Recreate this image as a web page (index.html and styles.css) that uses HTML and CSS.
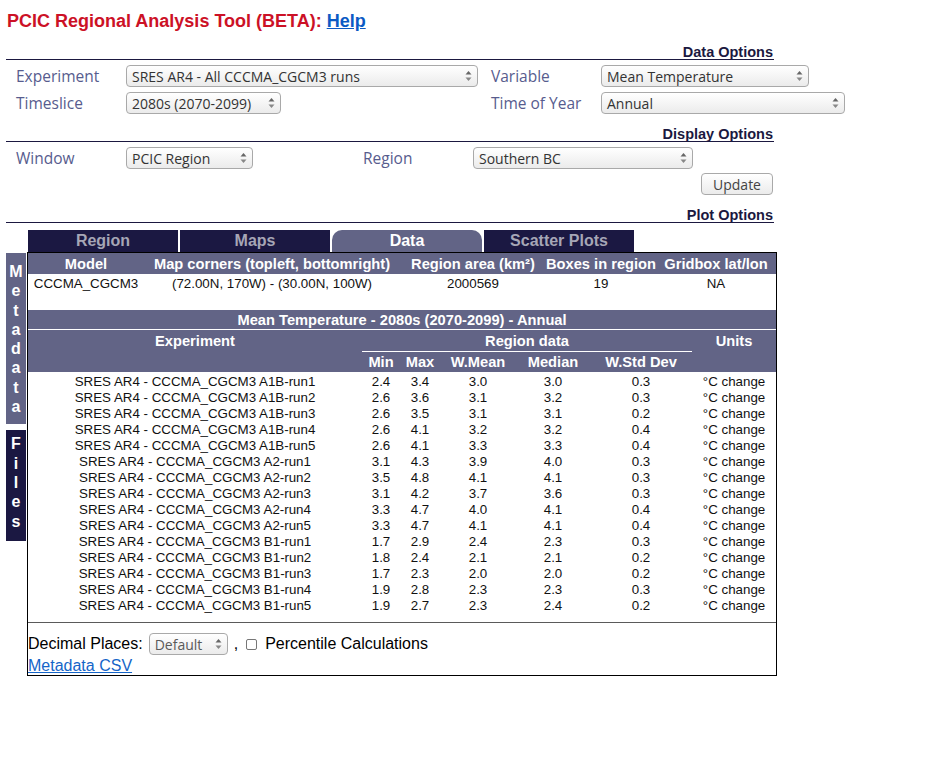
FILE: index.html
```html
<!DOCTYPE html>
<html>
<head>
<meta charset="utf-8">
<title>PCIC Regional Analysis Tool</title>
<link rel="stylesheet" href="styles.css">
</head>
<body>
<div class="page">
  <h1 class="title">PCIC Regional Analysis Tool (BETA): <a href="#">Help</a></h1>

  <div class="section-head head-data">Data Options</div>
  <div class="opt-grid data-grid">
    <span class="lbl">Experiment</span>
    <span class="sel w-exp"><span>SRES AR4 - All CCCMA_CGCM3 runs</span><svg class="arr" width="7" height="12" viewBox="0 0 7 12"><path d="M0.5 4.5 L3.5 1 L6.5 4.5Z" fill="#666"/><path d="M0.5 7.5 L3.5 11 L6.5 7.5Z" fill="#888"/></svg></span>
    <span class="lbl">Variable</span>
    <span class="sel w-var"><span>Mean Temperature</span><svg class="arr" width="7" height="12" viewBox="0 0 7 12"><path d="M0.5 4.5 L3.5 1 L6.5 4.5Z" fill="#666"/><path d="M0.5 7.5 L3.5 11 L6.5 7.5Z" fill="#888"/></svg></span>
    <span class="lbl">Timeslice</span>
    <span class="sel w-time"><span>2080s (2070-2099)</span><svg class="arr" width="7" height="12" viewBox="0 0 7 12"><path d="M0.5 4.5 L3.5 1 L6.5 4.5Z" fill="#666"/><path d="M0.5 7.5 L3.5 11 L6.5 7.5Z" fill="#888"/></svg></span>
    <span class="lbl">Time of Year</span>
    <span class="sel w-toy"><span>Annual</span><svg class="arr" width="7" height="12" viewBox="0 0 7 12"><path d="M0.5 4.5 L3.5 1 L6.5 4.5Z" fill="#666"/><path d="M0.5 7.5 L3.5 11 L6.5 7.5Z" fill="#888"/></svg></span>
  </div>

  <div class="section-head head-display">Display Options</div>
  <div class="opt-grid display-grid">
    <span class="lbl">Window</span>
    <span class="sel w-win"><span>PCIC Region</span><svg class="arr" width="7" height="12" viewBox="0 0 7 12"><path d="M0.5 4.5 L3.5 1 L6.5 4.5Z" fill="#666"/><path d="M0.5 7.5 L3.5 11 L6.5 7.5Z" fill="#888"/></svg></span>
    <span class="lbl">Region</span>
    <span class="sel w-reg"><span>Southern BC</span><svg class="arr" width="7" height="12" viewBox="0 0 7 12"><path d="M0.5 4.5 L3.5 1 L6.5 4.5Z" fill="#666"/><path d="M0.5 7.5 L3.5 11 L6.5 7.5Z" fill="#888"/></svg></span>
  </div>
  <div class="update-row"><button class="btn">Update</button></div>

  <div class="section-head head-plot">Plot Options</div>

  <div class="workspace">
    <div class="side">
      <div class="side-tab meta"><span>M</span><span>e</span><span>t</span><span>a</span><span>d</span><span>a</span><span>t</span><span>a</span></div>
      <div class="side-tab files"><span>F</span><span>i</span><span>l</span><span>e</span><span>s</span></div>
    </div>
    <div class="main">
      <div class="tabs">
        <div class="tab">Region</div>
        <div class="tab">Maps</div>
        <div class="tab active">Data</div>
        <div class="tab">Scatter Plots</div>
      </div>
      <div class="panel">
        <table class="meta-table">
          <colgroup><col class="c116"><col class="c256"><col class="c146"><col class="c110"><col class="c120"></colgroup>
          <tr><th>Model</th><th>Map corners (topleft, bottomright)</th><th>Region area (km²)</th><th>Boxes in region</th><th>Gridbox lat/lon</th></tr>
          <tr><td>CCCMA_CGCM3</td><td>(72.00N, 170W) - (30.00N, 100W)</td><td>2000569</td><td>19</td><td>NA</td></tr>
        </table>

        <table class="data-table">
          <colgroup><col class="c334"><col class="c38"><col class="c40"><col class="c76"><col class="c74"><col class="c102"><col class="c84"></colgroup>
          <tr class="titlebar"><th colspan="7">Mean Temperature - 2080s (2070-2099) - Annual</th></tr>
          <tr class="hrow1"><th rowspan="2" class="top">Experiment</th><th colspan="5" class="rdata">Region data</th><th rowspan="2" class="top">Units</th></tr>
          <tr class="hrow2"><th>Min</th><th>Max</th><th>W.Mean</th><th>Median</th><th>W.Std Dev</th></tr>
          <tr class="first"><td>SRES AR4 - CCCMA_CGCM3 A1B-run1</td><td>2.4</td><td>3.4</td><td>3.0</td><td>3.0</td><td>0.3</td><td>°C change</td></tr>
          <tr><td>SRES AR4 - CCCMA_CGCM3 A1B-run2</td><td>2.6</td><td>3.6</td><td>3.1</td><td>3.2</td><td>0.3</td><td>°C change</td></tr>
          <tr><td>SRES AR4 - CCCMA_CGCM3 A1B-run3</td><td>2.6</td><td>3.5</td><td>3.1</td><td>3.1</td><td>0.2</td><td>°C change</td></tr>
          <tr><td>SRES AR4 - CCCMA_CGCM3 A1B-run4</td><td>2.6</td><td>4.1</td><td>3.2</td><td>3.2</td><td>0.4</td><td>°C change</td></tr>
          <tr><td>SRES AR4 - CCCMA_CGCM3 A1B-run5</td><td>2.6</td><td>4.1</td><td>3.3</td><td>3.3</td><td>0.4</td><td>°C change</td></tr>
          <tr><td>SRES AR4 - CCCMA_CGCM3 A2-run1</td><td>3.1</td><td>4.3</td><td>3.9</td><td>4.0</td><td>0.3</td><td>°C change</td></tr>
          <tr><td>SRES AR4 - CCCMA_CGCM3 A2-run2</td><td>3.5</td><td>4.8</td><td>4.1</td><td>4.1</td><td>0.3</td><td>°C change</td></tr>
          <tr><td>SRES AR4 - CCCMA_CGCM3 A2-run3</td><td>3.1</td><td>4.2</td><td>3.7</td><td>3.6</td><td>0.3</td><td>°C change</td></tr>
          <tr><td>SRES AR4 - CCCMA_CGCM3 A2-run4</td><td>3.3</td><td>4.7</td><td>4.0</td><td>4.1</td><td>0.4</td><td>°C change</td></tr>
          <tr><td>SRES AR4 - CCCMA_CGCM3 A2-run5</td><td>3.3</td><td>4.7</td><td>4.1</td><td>4.1</td><td>0.4</td><td>°C change</td></tr>
          <tr><td>SRES AR4 - CCCMA_CGCM3 B1-run1</td><td>1.7</td><td>2.9</td><td>2.4</td><td>2.3</td><td>0.3</td><td>°C change</td></tr>
          <tr><td>SRES AR4 - CCCMA_CGCM3 B1-run2</td><td>1.8</td><td>2.4</td><td>2.1</td><td>2.1</td><td>0.2</td><td>°C change</td></tr>
          <tr><td>SRES AR4 - CCCMA_CGCM3 B1-run3</td><td>1.7</td><td>2.3</td><td>2.0</td><td>2.0</td><td>0.2</td><td>°C change</td></tr>
          <tr><td>SRES AR4 - CCCMA_CGCM3 B1-run4</td><td>1.9</td><td>2.8</td><td>2.3</td><td>2.3</td><td>0.3</td><td>°C change</td></tr>
          <tr><td>SRES AR4 - CCCMA_CGCM3 B1-run5</td><td>1.9</td><td>2.7</td><td>2.3</td><td>2.4</td><td>0.2</td><td>°C change</td></tr>
        </table>

        <div class="sep"></div>
        <div class="dec-row">
          <span>Decimal Places:</span>
          <span class="sel w-dec"><span>Default</span><svg class="arr" width="7" height="12" viewBox="0 0 7 12"><path d="M0.5 4.5 L3.5 1 L6.5 4.5Z" fill="#666"/><path d="M0.5 7.5 L3.5 11 L6.5 7.5Z" fill="#888"/></svg></span>
          <span class="comma">,</span>
          <span class="chk"></span>
          <span class="pct">Percentile Calculations</span>
        </div>
        <div class="link-row"><a href="#">Metadata CSV</a></div>
      </div>
    </div>
  </div>
</div>
</body>
</html>
```

FILE: styles.css
```css
body {
  margin: 0;
  background: #fff;
  color: #000;
  font-family: "Liberation Sans", Arial, sans-serif;
}

.page {
  padding-left: 6px;
  width: 768px;
}

.title {
  margin: 10px 0 0 1px;
  font-size: 18px;
  line-height: 22px;
  font-weight: bold;
  color: #cc1126;
}

.title a {
  color: #0b5ac4;
  text-decoration: underline;
}

.section-head {
  text-align: right;
  font-weight: bold;
  font-size: 14.5px;
  line-height: 14px;
  padding: 0 1px 0 0;
  border-bottom: 1px solid #1b1840;
  color: #1b1840;
}

.head-data { margin-top: 13px; }
.head-display { margin-top: 13px; }
.head-plot { margin-top: 13px; }

.opt-grid {
  display: grid;
  padding: 5px 0 0 10px;
  row-gap: 5px;
  align-items: center;
  justify-items: start;
}

.data-grid { grid-template-columns: 110px 365px 110px auto; }
.display-grid { grid-template-columns: 110px 237px 110px auto; }

.lbl {
  font-family: "Open Sans", "DejaVu Sans", sans-serif;
  font-size: 15.5px;
  line-height: 22px;
  color: #575c8e;
  margin-top: -1px;
}

.sel {
  display: inline-flex;
  align-items: center;
  justify-content: space-between;
  box-sizing: border-box;
  height: 22px;
  padding: 0 5px 0 5px;
  border: 1px solid #a9a9a9;
  border-radius: 4px;
  background: linear-gradient(#ffffff, #ebebeb);
  font-family: "Open Sans", "DejaVu Sans", sans-serif;
  font-size: 14px;
  color: #333;
  white-space: nowrap;
}

.arr { flex: none; }

.w-exp { width: 352px; }
.w-var { width: 208px; }
.w-time { width: 155px; }
.w-toy { width: 244px; }
.w-win { width: 127px; }
.w-reg { width: 220px; }
.w-dec { width: 79px; color: #5a5a5a; margin-left: 6px; }

.update-row {
  display: flex;
  justify-content: flex-end;
  margin-top: 4px;
  padding-right: 1px;
}

.btn {
  box-sizing: border-box;
  width: 72px;
  height: 22px;
  padding: 0;
  border: 1px solid #a9a9a9;
  border-radius: 4px;
  background: linear-gradient(#ffffff, #ebebeb);
  font-family: "Open Sans", "DejaVu Sans", sans-serif;
  font-size: 14px;
  color: #444;
}

.workspace {
  display: flex;
  margin-top: 7px;
}

.side {
  flex: none;
  width: 20px;
  margin-right: 1px;
  padding-top: 23px;
}

.side-tab {
  display: flex;
  flex-direction: column;
  align-items: center;
  color: #fff;
  font-weight: bold;
  font-size: 16px;
  line-height: 19.3px;
}

.meta {
  background: #626486;
  padding: 9px 0 8px;
}

.files {
  background: #1b1842;
  margin-top: 6px;
  padding: 4px 0 10px;
}

.main {
  flex: none;
  width: 750px;
}

.tabs {
  display: flex;
  gap: 2px;
  padding-left: 1px;
}

.tab {
  width: 150px;
  height: 22px;
  line-height: 22px;
  text-align: center;
  font-weight: bold;
  font-size: 16px;
  background: #1b1842;
  color: #a6a6b6;
}

.tab.active {
  background: #626486;
  color: #fff;
  border-radius: 10px 10px 0 0;
}

.panel {
  border: 1px solid #000;
  height: 422px;
}

table {
  width: 748px;
  table-layout: fixed;
  border-collapse: separate;
  border-spacing: 0;
}

th {
  background: #626486;
  color: #fff;
  font-weight: bold;
  font-size: 14.67px;
  padding: 0;
  text-align: center;
  white-space: nowrap;
}

td {
  padding: 0;
  text-align: center;
  font-size: 13.33px;
  white-space: nowrap;
  color: #111;
}

.c116 { width: 116px; }
.c256 { width: 256px; }
.c146 { width: 146px; }
.c110 { width: 110px; }
.c120 { width: 120px; }
.c334 { width: 334px; }
.c38 { width: 38px; }
.c40 { width: 40px; }
.c76 { width: 76px; }
.c74 { width: 74px; }
.c102 { width: 102px; }
.c84 { width: 84px; }

.meta-table { margin: 0 0 16px; }
.meta-table th { height: 20px; line-height: 20px; padding-top: 1px; }
.meta-table td { height: 20px; line-height: 18px; }

.data-table .titlebar th {
  height: 18px;
  line-height: 18px;
  padding-top: 1px;
  border-bottom: 1px solid #fff;
}

.data-table th.top {
  vertical-align: top;
  line-height: 21px;
  padding-top: 1px;
}

.data-table .rdata {
  height: 20px;
  line-height: 20px;
  padding-top: 1px;
  border-bottom: 1px solid #fff;
}

.data-table .hrow2 th {
  height: 20px;
  line-height: 20px;
  vertical-align: top;
}

.data-table td {
  height: 16px;
  line-height: 16px;
}

.data-table .first td { padding-top: 2px; }

.sep {
  margin-top: 8px;
  border-top: 1px solid #5a5a5a;
}

.dec-row {
  display: flex;
  align-items: center;
  height: 22px;
  margin-top: 10px;
  font-size: 16px;
}

.comma { margin-left: 6px; }

.chk {
  box-sizing: border-box;
  width: 11px;
  height: 11px;
  margin-left: 8px;
  border: 1px solid #777;
  border-radius: 2px;
  background: #fff;
}

.pct { margin-left: 8px; }

.link-row {
  font-size: 16px;
  line-height: 21px;
}

.link-row a {
  color: #1565c8;
  text-decoration: underline;
}
```
